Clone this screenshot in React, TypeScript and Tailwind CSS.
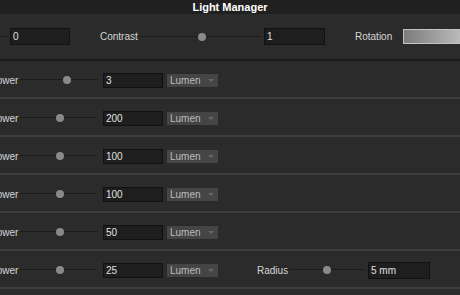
import React from "react";

const font = { fontFamily: '"Liberation Sans", Arial, sans-serif' };

function Slider({ width, dot }: { width: number; dot: number }) {
  return (
    <div className="relative h-[10px] shrink-0" style={{ width }}>
      <div className="absolute left-0 right-0 top-[4px] h-px bg-[#1c1c1c]" />
      <div
        className="absolute top-[1px] h-[8px] w-[8px] rounded-full bg-[#8a8a8a]"
        style={{ left: dot - 4 }}
      />
    </div>
  );
}

function Field({ value, w, h = 15 }: { value: string; w: number; h?: number }) {
  return (
    <div
      className="shrink-0 flex items-center border border-[#111] bg-[#1e1e1e] pl-[2px] text-[10px] text-[#e0e0e0]"
      style={{ width: w, height: h }}
    >
      {value}
    </div>
  );
}

function Unit() {
  return (
    <div className="ml-[3px] flex h-[15px] w-[53px] shrink-0 items-center justify-between border border-[#2a2a2a] bg-[#454545] pl-[3px] pr-[4px] text-[10px] text-[#bcbcbc]">
      <span>Lumen</span>
      <span className="h-0 w-0 border-x-[3px] border-t-[3px] border-x-transparent border-t-[#666]" />
    </div>
  );
}

const rows = [
  { value: "3", dot: 47 },
  { value: "200", dot: 40 },
  { value: "100", dot: 40 },
  { value: "100", dot: 40 },
  { value: "50", dot: 40 },
  { value: "25", dot: 40, radius: true },
];

export default function App() {
  return (
    <div className="h-[295px] w-[460px] overflow-hidden bg-[#2b2b2b] text-[10px] text-[#d6d6d6]" style={font}>
      <div className="flex h-[14px] items-center justify-center bg-[#202020] text-[11px] font-bold text-white">
        Light Manager
      </div>

      <div className="flex h-[47px] items-center border-b-2 border-[#1b1b1b]">
        <div className="h-px w-[8px] shrink-0 bg-[#1c1c1c]" />
        <div className="ml-[2px]">
          <Field value="0" w={60} h={17} />
        </div>
        <span className="ml-[30px] w-[40px] shrink-0">Contrast</span>
        <Slider width={121} dot={62} />
        <div className="ml-[3px]">
          <Field value="1" w={61} h={17} />
        </div>
        <span className="ml-[30px] w-[48px] shrink-0">Rotation</span>
        <div className="h-[15px] w-[70px] shrink-0 border border-[#c4c4c4] bg-[linear-gradient(90deg,#7c7c7c,#9a9a9a_40%,#b8b8b8_80%,#cfcfcf)]" />
      </div>

      {rows.map((r, i) => (
        <div key={i} className="-ml-[10px] flex h-[38px] items-center border-b-2 border-[#3d3d3d] pt-[2px]">
          <span className="w-[30px] shrink-0">Power</span>
          <Slider width={77} dot={r.dot} />
          <div className="ml-[6px]">
            <Field value={r.value} w={60} />
          </div>
          <Unit />
          {r.radius && (
            <>
              <span className="ml-[38px] w-[28px] shrink-0">Radius</span>
              <Slider width={80} dot={42} />
              <div className="ml-[3px]">
                <Field value="5 mm" w={62} h={17} />
              </div>
            </>
          )}
        </div>
      ))}
    </div>
  );
}
